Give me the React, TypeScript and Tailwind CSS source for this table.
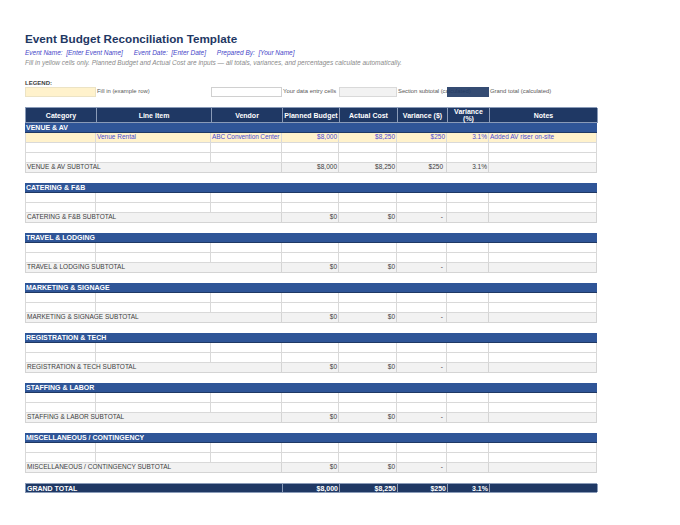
import React from 'react'

const COLS = 'grid w-[572px] grid-cols-[71px_115px_71px_57px_58px_50px_42px_108px]'

const HEADERS = [
  'Category',
  'Line Item',
  'Vendor',
  'Planned Budget',
  'Actual Cost',
  'Variance ($)',
  'Variance (%)',
  'Notes',
]

type Line = {
  item: string
  vendor: string
  planned: string
  actual: string
  variance: string
  pct: string
  notes: string
}

type SectionData = {
  name: string
  lines: (Line | null)[]
  totals: [string, string, string, string]
}

const SECTIONS: SectionData[] = [
  {
    name: 'VENUE & AV',
    lines: [
      {
        item: 'Venue Rental',
        vendor: 'ABC Convention Center',
        planned: '$8,000',
        actual: '$8,250',
        variance: '$250',
        pct: '3.1%',
        notes: 'Added AV riser on-site',
      },
      null,
      null,
    ],
    totals: ['$8,000', '$8,250', '$250', '3.1%'],
  },
  { name: 'CATERING & F&B', lines: [null, null], totals: ['$0', '$0', '-', ''] },
  { name: 'TRAVEL & LODGING', lines: [null, null], totals: ['$0', '$0', '-', ''] },
  { name: 'MARKETING & SIGNAGE', lines: [null, null], totals: ['$0', '$0', '-', ''] },
  { name: 'REGISTRATION & TECH', lines: [null, null], totals: ['$0', '$0', '-', ''] },
  { name: 'STAFFING & LABOR', lines: [null, null], totals: ['$0', '$0', '-', ''] },
  { name: 'MISCELLANEOUS / CONTINGENCY', lines: [null, null], totals: ['$0', '$0', '-', ''] },
]

const cell =
  'h-[10px] flex items-center whitespace-nowrap border-r border-b border-[#d9d9d9] px-[1px]'

function DataRow({ line }: { line: Line | null }) {
  if (!line) {
    return (
      <div className={COLS}>
        {HEADERS.map((h, i) => (
          <div key={h} className={`${cell} ${i === 0 ? 'border-l' : ''}`} />
        ))}
      </div>
    )
  }
  return (
    <div className={`${COLS} bg-[#fff2cc] text-[#4b4bd0]`}>
      <div className={`${cell} border-l`} />
      <div className={cell}>{line.item}</div>
      <div className={`${cell} tracking-[-0.1px]`}>{line.vendor}</div>
      <div className={`${cell} justify-end`}>{line.planned}</div>
      <div className={`${cell} justify-end`}>{line.actual}</div>
      <div className={`${cell} justify-end`}>{line.variance}</div>
      <div className={`${cell} justify-end`}>{line.pct}</div>
      <div className={cell}>{line.notes}</div>
    </div>
  )
}

function Section({ data }: { data: SectionData }) {
  const sub = 'h-[10px] flex items-center justify-end border-r border-b border-[#d4d4d4] px-[1px]'
  return (
    <div className="mb-[10px]">
      <div className="h-[10px] flex items-center bg-[#2f5597] border-b border-[#1f3864] text-white font-bold text-[7px] px-[1px] w-[572px]">
        {data.name}
      </div>
      {data.lines.map((l, i) => (
        <DataRow key={i} line={l} />
      ))}
      <div className={`${COLS} bg-[#f2f2f2] text-[#404040]`}>
        <div className="col-span-3 h-[10px] flex items-center whitespace-nowrap border-l border-r border-b border-[#d4d4d4] px-[1px]">
          {data.name} SUBTOTAL
        </div>
        <div className={sub}>{data.totals[0]}</div>
        <div className={sub}>{data.totals[1]}</div>
        <div className={`${sub} pr-[3px]`}>{data.totals[2]}</div>
        <div className={sub}>{data.totals[3]}</div>
        <div className={sub} />
      </div>
    </div>
  )
}

export default function App() {
  const gt = 'h-[8px] flex items-center justify-end border-r border-[#8a9bb8] px-[1px]'
  return (
    <div
      className="w-[680px] min-h-[525px] bg-white pl-[25px] pt-[32px] text-[6.5px] leading-none"
      style={{ fontFamily: '"Liberation Sans", Arial, sans-serif' }}
    >
      <h1 className="text-[11.7px] leading-[14px] font-bold text-[#1f3864]">
        Event Budget Reconciliation Template
      </h1>
      <div className="mt-[2px] h-[10px] flex items-center italic text-[#4646c8] whitespace-pre">
        {'Event Name:  [Enter Event Name]      Event Date:  [Enter Date]      Prepared By:  [Your Name]'}
      </div>
      <div className="h-[10px] flex items-center italic text-[#8a8a8a]">
        Fill in yellow cells only. Planned Budget and Actual Cost are inputs — all totals, variances, and percentages calculate automatically.
      </div>

      <div className="mt-[10px] h-[9px] flex items-center font-bold text-[6px] text-[#404040]">LEGEND:</div>
      <div className={`${COLS} text-[#595959] text-[5.9px]`}>
        <div className="h-[10px] bg-[#fff2cc] border border-[#ece3c4]" />
        <div className="h-[10px] flex items-center px-[1px]">Fill in (example row)</div>
        <div className="h-[10px] bg-white border border-[#d0d0d0]" />
        <div className="h-[10px] flex items-center px-[1px] whitespace-nowrap">Your data entry cells</div>
        <div className="h-[10px] bg-[#f2f2f2] border border-[#d9d9d9]" />
        <div className="h-[10px] flex items-center pl-[1px] whitespace-nowrap tracking-[-0.05px]">Section subtotal (calculated)</div>
        <div className="h-[10px] bg-[#1f3864]/90" />
        <div className="h-[10px] flex items-center px-[1px] whitespace-nowrap">Grand total (calculated)</div>
      </div>

      <div className="mt-[10px]">
        <div className={`${COLS} bg-[#1f3864] text-white font-bold text-[7px] border-l border-t border-[#8a9bb8]`}>
          {HEADERS.map((h) => (
            <div
              key={h}
              className="h-[15px] flex items-center justify-center text-center leading-[7px] border-r border-b border-[#8a9bb8] whitespace-nowrap [&:nth-child(7)]:whitespace-normal"
            >
              {h}
            </div>
          ))}
        </div>
        {SECTIONS.map((s) => (
          <Section key={s.name} data={s} />
        ))}
        <div className={`${COLS} bg-[#1f3864] text-white font-bold text-[7px] border-t border-b border-l border-[#8a9bb8]`}>
          <div className="col-span-3 h-[8px] flex items-center border-r border-[#8a9bb8] px-[1px]">GRAND TOTAL</div>
          <div className={gt}>$8,000</div>
          <div className={gt}>$8,250</div>
          <div className={gt}>$250</div>
          <div className={gt}>3.1%</div>
          <div className="h-[8px] border-r border-[#8a9bb8]" />
        </div>
      </div>
    </div>
  )
}
